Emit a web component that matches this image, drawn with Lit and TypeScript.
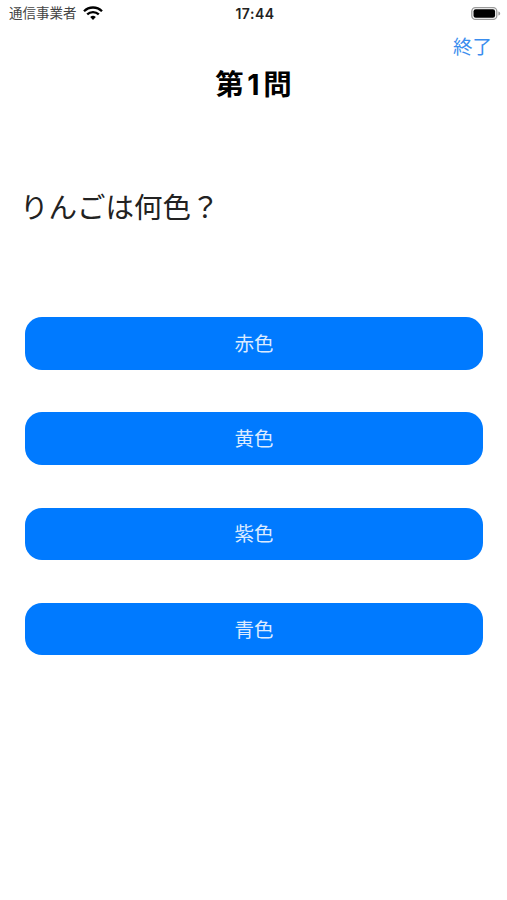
import { LitElement, html, css } from "lit";
import { customElement } from "lit/decorators.js";

@customElement("app-root")
export class AppRoot extends LitElement {
  static styles = css`
    :host {
      display: block;
      width: 507px;
      height: 900px;
      background: #fff;
      font-family: "Inter", "Noto Sans CJK JP", sans-serif;
      color: #000;
      overflow: hidden;
    }
    .status {
      height: 27px;
      display: grid;
      grid-template-columns: 1fr auto 1fr;
      align-items: center;
      padding: 0 6px 0 9px;
    }
    .left { display: flex; align-items: center; gap: 6px; }
    .carrier { font-size: 13.5px; line-height: 27px; color: #444; }
    .time { font-size: 14px; font-weight: 600; color: #222; letter-spacing: 0.5px; }
    .right { display: flex; justify-content: flex-end; }
    .nav {
      height: 36px;
      display: flex;
      justify-content: flex-end;
      align-items: center;
      padding: 1px 15px 0 0;
      box-sizing: border-box;
      margin-top: 2px;
    }
    .end { font-size: 19.5px; color: #3a8dee; line-height: 1; }
    .title {
      margin: 0;
      text-align: center;
      font-size: 28.5px;
      font-weight: 700;
      line-height: 40px;
      letter-spacing: 3.5px;
      padding-left: 3.5px;
    }
    .question {
      margin: 81px 0 0 20px;
      font-size: 28.5px;
      font-weight: 400;
      line-height: 44px;
      color: #222;
    }
    .answers {
      display: flex;
      flex-direction: column;
      gap: 42.7px;
      padding: 0 24px 0 25px;
      margin-top: 87.3px;
    }
    .answer {
      height: 52.5px;
      border: 0;
      border-radius: 17px;
      background: #007aff;
      color: #dcebff;
      font-family: inherit;
      font-size: 19.5px;
      font-weight: 400;
      padding: 0 0 2px;
    }
  `;

  render() {
    const answers = ["赤色", "黄色", "紫色", "青色"];
    return html`
      <div class="status">
        <div class="left">
          <span class="carrier">通信事業者</span>
          <svg width="20" height="15" viewBox="0 0 20 15" aria-hidden="true">
            <path d="M1 5.2a12.8 12.8 0 0 1 18 0" fill="none" stroke="#000" stroke-width="2.3" />
            <path d="M4.2 8.4a8.3 8.3 0 0 1 11.6 0" fill="none" stroke="#000" stroke-width="2.3" />
            <path d="M7.2 11a4 4 0 0 1 5.6 0L10 14z" fill="#000" />
          </svg>
        </div>
        <span class="time">17:44</span>
        <div class="right">
          <svg width="30" height="15" viewBox="0 0 30 15" aria-hidden="true">
            <rect x="0.8" y="1.6" width="25" height="11.8" rx="3.6" fill="none" stroke="#9a9a9a" stroke-width="1.3" />
            <rect x="2.5" y="3.2" width="21.6" height="8.6" rx="2.2" fill="#000" />
            <path d="M27.4 5.4c1.2.3 1.8 1.1 1.8 2.1s-.6 1.8-1.8 2.1z" fill="#9a9a9a" />
          </svg>
        </div>
      </div>
      <div class="nav"><span class="end">終了</span></div>
      <h1 class="title">第1問</h1>
      <p class="question">りんごは何色？</p>
      <div class="answers">
        ${answers.map((a) => html`<button class="answer">${a}</button>`)}
      </div>
    `;
  }
}
